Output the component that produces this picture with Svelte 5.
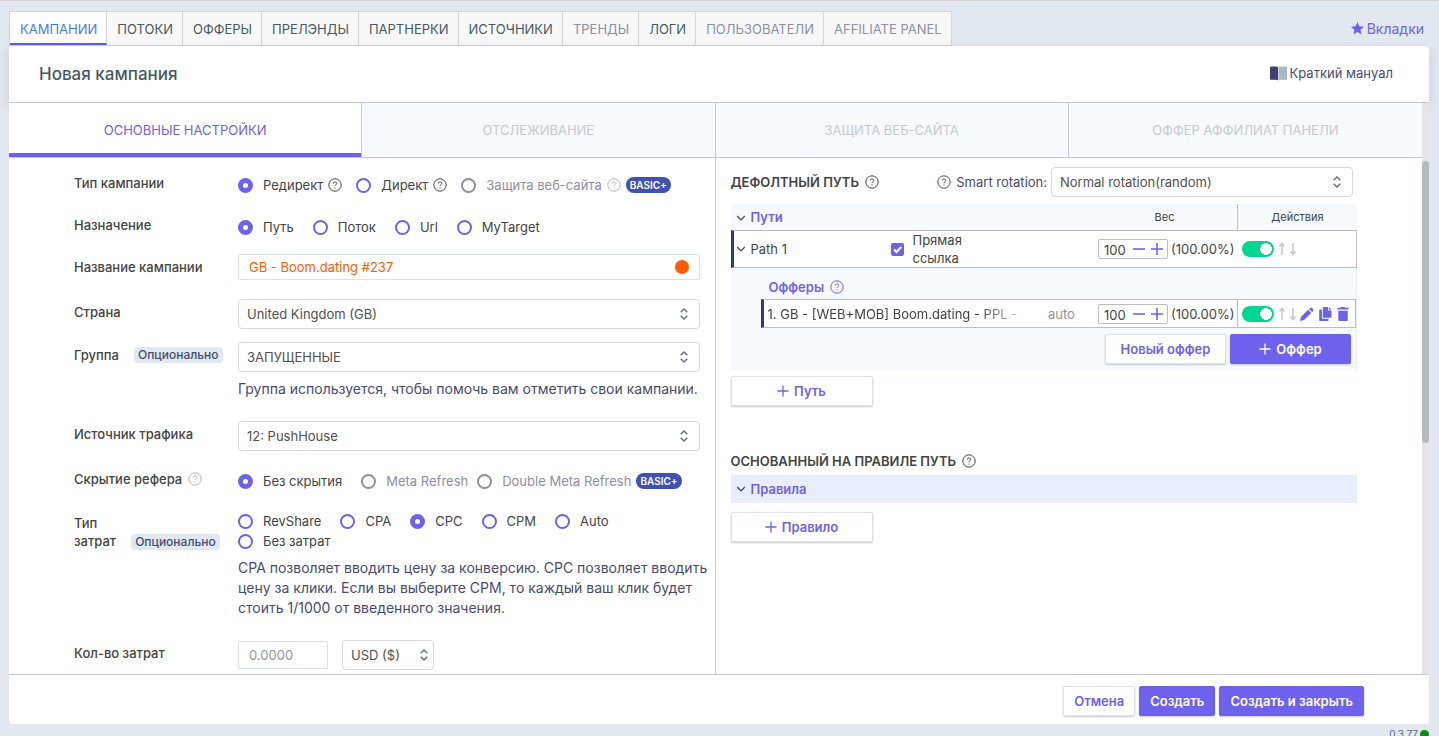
<script>
	let campaignType = $state('redirect');
	let target = $state('path');
	let referrer = $state('none');
	let costType = $state('cpc');
	let campaignName = $state('GB - Boom.dating #237');
	let directLink = $state(true);

	const tabs = [
		{ title: 'КАМПАНИИ', active: true },
		{ title: 'ПОТОКИ' },
		{ title: 'ОФФЕРЫ' },
		{ title: 'ПРЕЛЭНДЫ' },
		{ title: 'ПАРТНЕРКИ' },
		{ title: 'ИСТОЧНИКИ' },
		{ title: 'ТРЕНДЫ', muted: true },
		{ title: 'ЛОГИ' },
		{ title: 'ПОЛЬЗОВАТЕЛИ', muted: true },
		{ title: 'AFFILIATE PANEL', muted: true }
	];

	const sections = [
		'ОСНОВНЫЕ НАСТРОЙКИ',
		'ОТСЛЕЖИВАНИЕ',
		'ЗАЩИТА ВЕБ-САЙТА',
		'ОФФЕР АФФИЛИАТ ПАНЕЛИ'
	];

	const targets = [
		{ value: 'path', title: 'Путь' },
		{ value: 'flow', title: 'Поток' },
		{ value: 'url', title: 'Url' },
		{ value: 'mytarget', title: 'MyTarget' }
	];

	const costTypes = [
		{ value: 'revshare', title: 'RevShare' },
		{ value: 'cpa', title: 'CPA' },
		{ value: 'cpc', title: 'CPC' },
		{ value: 'cpm', title: 'CPM' },
		{ value: 'auto', title: 'Auto' },
		{ value: 'free', title: 'Без затрат' }
	];
</script>

{#snippet help(tone)}
	<svg class="help {tone}" viewBox="0 0 14 14" width="14" height="14" aria-hidden="true">
		<circle cx="7" cy="7" r="6.2" />
		<path d="M5.3 5.6c0-1 .7-1.7 1.7-1.7s1.8.6 1.8 1.6c0 1.2-1.8 1.2-1.8 2.6" />
		<path d="M7 9.5v1" />
	</svg>
{/snippet}

{#snippet chevron()}
	<svg class="chevron" viewBox="0 0 10 10" width="10" height="10" aria-hidden="true">
		<path d="M1.2 3 5 6.800 8.800 3" />
	</svg>
{/snippet}

{#snippet plus()}
	<svg class="plus" viewBox="0 0 12 12" width="12" height="12" aria-hidden="true">
		<path d="M6 .5v11M.5 6h11" />
	</svg>
{/snippet}

{#snippet weight(name)}
	<div class="weight">
		<span class="stepper">
			<input type="text" value="100" aria-label={name} />
			<button type="button" aria-label="Меньше">
				<svg viewBox="0 0 12 12" width="12" height="12"><path d="M0 6h12" /></svg>
			</button>
			<button type="button" aria-label="Больше">
				<svg viewBox="0 0 12 12" width="12" height="12"><path d="M0 6h12M6 0v12" /></svg>
			</button>
		</span>
		<span>(100.00%)</span>
	</div>
{/snippet}

{#snippet arrows()}
	<svg class="arrows" viewBox="0 0 18 14" width="18" height="14" aria-hidden="true">
		<path d="M4 13V2M1.500 4.500 4 1.500 6.500 4.500M15 1v11M12.500 9.500l2.500 3 2.500-3" />
	</svg>
{/snippet}

<div class="page">
	<nav class="topbar">
		<div class="tabs">
			{#each tabs as tab}
				<a href="#top" class:active={tab.active} class:muted={tab.muted}>{tab.title}</a>
			{/each}
		</div>
		<a class="bookmarks" href="#tabs">
			<svg viewBox="0 0 12 12" width="13" height="13" aria-hidden="true">
				<path d="M6 0l1.700 3.900 4.300.4-3.200 2.900.9 4.300L6 9.300l-3.700 2.200.9-4.300L0 4.300l4.300-.4z" />
			</svg>
			Вкладки
		</a>
	</nav>

	<main class="panel">
		<header>
			<h1>Новая кампания</h1>
			<a class="manual" href="#manual">
				<svg viewBox="0 0 17 15" width="17" height="15" aria-hidden="true">
					<path fill="#413f72" d="M.8.500h5.200q1.500 0 2 .7v13.300q-.6-.7-2-.7H.8q-.8 0-.8-.8V1.300Q0 .5.800.500z" />
					<path fill="#a9b7c7" d="M16.200.500H11q-1.800 0-2.500.7v13.300q.6-.7 2-.7h5.700q.8 0 .8-.8V1.300q0-.8-.8-.8z" />
				</svg>
				Краткий мануал
			</a>
		</header>

		<div class="scroller">
			<div class="content">
				<div class="sections" role="tablist">
					{#each sections as section, i}
						<button type="button" role="tab" aria-selected={i === 0} class:active={i === 0}>{section}</button>
					{/each}
				</div>

				<div class="columns">
					<form class="settings">
						<div class="row">
							<span class="label" id="type-label">Тип кампании</span>
							<div class="radios" role="radiogroup" aria-labelledby="type-label">
								<label class="with-help"><input type="radio" bind:group={campaignType} value="redirect" />Редирект {@render help('dark')}</label>
								<label class="with-help"><input type="radio" bind:group={campaignType} value="direct" />Директ {@render help('dark')}</label>
								<label class="disabled"><input type="radio" bind:group={campaignType} value="protect" disabled />Защита веб-сайта {@render help('light')}<span class="plan">BASIC+</span></label>
							</div>
						</div>

						<div class="row">
							<span class="label" id="target-label">Назначение</span>
							<div class="radios" role="radiogroup" aria-labelledby="target-label">
								{#each targets as item}
									<label><input type="radio" bind:group={target} value={item.value} />{item.title}</label>
								{/each}
							</div>
						</div>

						<div class="row name">
							<label class="label" for="name">Название кампании</label>
							<div class="field">
								<input id="name" type="text" bind:value={campaignName} />
								<button type="button" class="color" aria-label="Цвет"></button>
							</div>
						</div>

						<div class="row control">
							<label class="label" for="country">Страна</label>
							<select id="country"><option>United Kingdom (GB)</option></select>
						</div>

						<div class="row control near">
							<label class="label" for="group">Группа <span class="optional">Опционально</span></label>
							<div>
								<select id="group"><option>ЗАПУЩЕННЫЕ</option></select>
								<p>Группа используется, чтобы помочь вам отметить свои кампании.</p>
							</div>
						</div>

						<div class="row control far">
							<label class="label" for="source">Источник трафика</label>
							<select id="source"><option>12: PushHouse</option></select>
						</div>

						<div class="row">
							<span class="label" id="ref-label">Скрытие рефера {@render help('light')}</span>
							<div class="radios" role="radiogroup" aria-labelledby="ref-label">
								<label><input type="radio" bind:group={referrer} value="none" />Без скрытия</label>
								<label class="disabled"><input type="radio" bind:group={referrer} value="meta" disabled />Meta Refresh</label>
								<label class="disabled"><input type="radio" bind:group={referrer} value="double" disabled />Double Meta Refresh <span class="plan">BASIC+</span></label>
							</div>
						</div>

						<div class="row cost-type">
							<span class="label" id="cost-label"><span>Тип<br />затрат</span> <span class="optional">Опционально</span></span>
							<div>
								<div class="radios wrap" role="radiogroup" aria-labelledby="cost-label">
									{#each costTypes as item}
										<label><input type="radio" bind:group={costType} value={item.value} />{item.title}</label>
									{/each}
								</div>
								<p>CPA позволяет вводить цену за конверсию. CPC позволяет вводить цену за клики. Если вы выберите CPM, то каждый ваш клик будет стоить 1/1000 от введенного значения.</p>
							</div>
						</div>

						<div class="row control far">
							<label class="label" for="cost">Кол-во затрат</label>
							<div class="cost">
								<input id="cost" type="text" placeholder="0.0000" />
								<select aria-label="Валюта"><option>USD ($)</option></select>
							</div>
						</div>
					</form>

					<section class="paths">
						<div class="paths-head">
							<h2>ДЕФОЛТНЫЙ ПУТЬ {@render help('dark')}</h2>
							<label for="rotation">{@render help('indigo')} Smart rotation:</label>
							<select id="rotation"><option>Normal rotation(random)</option></select>
						</div>

						<table class="path-table">
							<colgroup>
								<col class="col-name" />
								<col />
								<col class="col-weight" />
								<col class="col-actions" />
							</colgroup>
							<thead>
								<tr>
									<th class="title" colspan="2">{@render chevron()}Пути</th>
									<th>Вес</th>
									<th class="divided">Действия</th>
								</tr>
							</thead>
							<tbody>
								<tr class="item path">
									<td><div class="cell">{@render chevron()}Path 1</div></td>
									<td>
										<label class="direct"><input type="checkbox" bind:checked={directLink} /><span>Прямая ссылка</span></label>
									</td>
									<td>{@render weight('Вес пути')}</td>
									<td>
										<div class="actions"><input class="toggle" type="checkbox" checked aria-label="Путь включен" />{@render arrows()}</div>
									</td>
								</tr>
								<tr>
									<td class="nested" colspan="4">
										<h3>Офферы {@render help('violet')}</h3>
										<table>
											<colgroup>
												<col />
												<col class="col-auto" />
												<col class="col-weight" />
												<col class="col-actions" />
											</colgroup>
											<tbody>
												<tr class="item offer">
													<td><span class="offer-name">1. GB - [WEB+MOB] Boom.dating - PPL -</span></td>
													<td class="auto">auto</td>
													<td>{@render weight('Вес оффера')}</td>
													<td class="divided">
														<div class="actions">
															<input class="toggle" type="checkbox" checked aria-label="Оффер включен" />
															{@render arrows()}
															<button type="button" aria-label="Изменить">
																<svg viewBox="0 0 14 14" width="14" height="14"><path d="M0 14l.9-4 7.200-7.200 3.100 3.100L4 13.100zM9 1.900l1-1q1-.9 1.900 0l1.200 1.200q.9 1 0 1.900l-1 1z" /></svg>
															</button>
															<button type="button" aria-label="Копировать">
																<svg viewBox="0 0 14 14" width="14" height="14"><path d="M5.600 0H10v3.500h3.500V10q0 .8-.8.800H5.600q-.8 0-.8-.8V.800Q4.800 0 5.600 0zM10.800 0l2.700 2.700h-2.700zM2 2.500h1.900V11q0 .700.700.700h5.900v1.500q0 .8-.8.800H2q-.8 0-.8-.8V3.300q0-.8.800-.8z" /></svg>
															</button>
															<button type="button" aria-label="Удалить">
																<svg viewBox="0 0 14 14" width="14" height="14"><path d="M1.500.800h3l.7-.8h3.600l.7.800h3v1.800h-11zM2.300 3.700h9.400V13q0 1-1 1H3.300q-1 0-1-1z" /></svg>
															</button>
														</div>
													</td>
												</tr>
											</tbody>
										</table>
										<div class="offer-buttons">
											<button type="button" class="btn">Новый оффер</button>
											<button type="button" class="btn primary">{@render plus()}Оффер</button>
										</div>
									</td>
								</tr>
							</tbody>
						</table>
						<button type="button" class="btn add">{@render plus()}Путь</button>

						<h2 class="rules-title">ОСНОВАННЫЙ НА ПРАВИЛЕ ПУТЬ {@render help('dark')}</h2>
						<div class="rules">{@render chevron()}Правила</div>
						<button type="button" class="btn add">{@render plus()}Правило</button>
					</section>
				</div>
			</div>
			<div class="scrollbar"><div class="thumb"></div></div>
		</div>

		<footer>
			<button type="button" class="btn">Отмена</button>
			<button type="button" class="btn primary">Создать</button>
			<button type="button" class="btn primary">Создать и закрыть</button>
		</footer>
	</main>

	<div class="version">0.3.77<i></i></div>
</div>

<style>
	:global(body) {
		background: #e1e8ef;
	}

	.page {
		box-sizing: border-box;
		display: flex;
		flex-direction: column;
		height: 100vh;
		overflow: hidden;
		padding: 10px 10px 0 9px;
		border-top: 1px solid #d4d4d4;
		background: #e1e8ef;
		color: #444;
		font-family: Inter, 'Liberation Sans', sans-serif;
		font-size: 13px;
		line-height: 20px;
	}

	.page :global(*) {
		box-sizing: border-box;
	}

	a {
		text-decoration: none;
	}

	button,
	input,
	select {
		margin: 0;
		font: inherit;
	}

	h1,
	h2,
	h3,
	p {
		margin: 0;
	}

	svg {
		flex: none;
		display: block;
	}

	/* top navigation */
	.topbar {
		flex: none;
		display: flex;
		justify-content: space-between;
		padding-right: 5px;
	}

	.tabs {
		display: flex;
		border: 1px solid #d4d4d4;
		border-right: 0;
	}

	.tabs a {
		height: 33px;
		padding: 0 9px 0 10px;
		border-right: 1px solid #d4d4d4;
		background: #f8f8f8;
		color: #455a64;
		line-height: 34px;
	}

	.tabs a.muted {
		color: #8e8ea5;
	}

	.tabs a.active {
		border-bottom: 2px solid #5b5ce6;
		background: #fff;
		color: #4a7be0;
	}

	.bookmarks {
		display: flex;
		align-items: center;
		gap: 3px;
		color: #6e62ec;
		font-size: 14px;
	}

	.bookmarks svg {
		fill: #6e62ec;
	}

	/* panel */
	.panel {
		flex: 1;
		display: flex;
		flex-direction: column;
		min-height: 0;
	}

	header {
		flex: none;
		display: flex;
		align-items: center;
		justify-content: space-between;
		height: 57px;
		padding: 0 36px 0 30px;
		border-bottom: 1px solid #c3c8d1;
		border-radius: 0 4px 0 0;
		background: #fff;
		box-shadow: 0 4px 12px rgba(90, 90, 160, 0.2);
	}

	h1 {
		color: #455a64;
		font-size: 17px;
		font-weight: 500;
	}

	.manual {
		display: flex;
		align-items: center;
		gap: 3px;
		padding-bottom: 2px;
		color: #484b6f;
	}

	.scroller {
		flex: 1;
		display: flex;
		min-height: 0;
		background: #fff;
	}

	.content {
		flex: 1;
		display: flex;
		flex-direction: column;
		min-width: 0;
		overflow: hidden;
	}

	.scrollbar {
		width: 7px;
		padding-top: 58px;
		background: #e3e5e6;
	}

	.thumb {
		height: 55%;
		max-height: 283px;
		border-radius: 4px;
		background: #b5babd;
	}

	.sections {
		flex: none;
		display: grid;
		grid-template-columns: repeat(4, 1fr);
		border-bottom: 1px solid #c3c8d1;
	}

	.sections button {
		height: 54px;
		padding: 0;
		border: 0;
		border-right: 1px solid #c3c8d1;
		background: #f6fafe;
		color: #c5c8d2;
	}

	.sections button:last-child {
		border-right: 0;
	}

	.sections button.active {
		background: #fff;
		color: #6e62ec;
		box-shadow: inset 0 -4px #6e62ec;
	}

	.columns {
		flex: 1;
		display: grid;
		grid-template-columns: 1fr 1fr;
		min-height: 0;
	}

	/* campaign form */
	.settings {
		padding: 15px 15px 0 65px;
		border-right: 1px solid #c3c8d1;
	}

	.row {
		display: grid;
		grid-template-columns: 164px 1fr;
		align-items: start;
		margin-bottom: 18px;
	}

	.row.name {
		margin: -3px 0 19px;
	}

	.row.near {
		margin-top: -5px;
	}

	.row.far {
		margin-top: 22px;
	}

	.label {
		display: flex;
		align-items: center;
		gap: 6px;
		font-weight: 500;
	}

	.control > .label,
	.name > .label,
	.cost-type > .label {
		padding-top: 3px;
	}

	.cost-type > .label {
		align-items: end;
		line-height: 18px;
	}

	.optional {
		margin-left: 9px;
		padding: 0 4px;
		border-radius: 4px;
		background: #e1e8ef;
		color: #484b6f;
		font-size: 12px;
		line-height: 16px;
	}

	.radios {
		display: flex;
		align-items: center;
		gap: 0 19px;
		height: 24px;
	}

	.radios.wrap {
		flex-wrap: wrap;
		height: auto;
	}

	.radios label {
		display: flex;
		align-items: center;
		gap: 10px;
		white-space: nowrap;
	}

	.radios label.with-help {
		gap: 5px;
		margin-right: -5px;
	}

	.radios label.with-help input,
	.radios label.disabled input {
		margin-right: 5px;
	}

	.radios label.disabled {
		gap: 5px;
		color: #8e8ea5;
	}

	.radios label.disabled + label.disabled {
		margin-left: -10px;
	}

	input[type='radio'] {
		appearance: none;
		width: 15px;
		height: 15px;
		border: 2px solid #6e62ec;
		border-radius: 50%;
		background: #fff;
	}

	input[type='radio']:checked {
		border-width: 5px;
	}

	input[type='radio']:disabled {
		border-color: #8e8ea5;
	}

	.plan {
		padding: 0 4px;
		border-radius: 8px;
		background: #3f51b5;
		color: #fff;
		font-size: 10px;
		font-weight: 600;
		line-height: 16px;
	}

	.help {
		fill: none;
		stroke: #444;
		stroke-width: 1;
	}

	.help.light {
		stroke: #b8b8b8;
	}

	.help.indigo {
		stroke: #484b6f;
	}

	.help.violet {
		stroke: #6e62ec;
	}

	.field {
		display: flex;
		align-items: center;
		height: 26px;
		padding-right: 10px;
		border: 1px solid #dae1e8;
		border-radius: 2px;
	}

	.field input {
		flex: 1;
		min-width: 0;
		height: 24px;
		padding: 0 10px;
		border: 0;
		background: none;
		color: #ff5c00;
		outline: none;
	}

	.color {
		width: 14px;
		height: 14px;
		padding: 0;
		border: 0;
		border-radius: 50%;
		background: #ff5c00;
	}

	select {
		appearance: none;
		display: block;
		width: 100%;
		height: 30px;
		padding: 0 24px 0 8px;
		border: 1px solid #d9d9d9;
		border-radius: 4px;
		background: #fff url("data:image/svg+xml,%3Csvg xmlns='http://www.w3.org/2000/svg' width='8' height='12' fill='none' stroke='%235f6b87' stroke-width='1.400'%3E%3Cpath d='M.700 4.300 4 1l3.300 3.300M.700 7.700 4 11l3.300-3.300'/%3E%3C/svg%3E") no-repeat right 11px center;
		color: #505050;
		text-overflow: ellipsis;
	}

	p {
		margin: 7px -15px 0 0;
		color: #484b6f;
		font-size: 14px;
	}

	.cost {
		display: flex;
		align-items: center;
		gap: 14px;
	}

	.cost input {
		width: 90px;
		height: 28px;
		padding: 0 10px;
		border: 1px solid #dae1e8;
		border-radius: 2px;
	}

	.cost input::placeholder {
		color: #949494;
	}

	.cost select {
		width: 92px;
		background-position: right 5px center;
	}

	/* paths */
	.paths {
		padding: 9px 65px 0 15px;
	}

	.paths-head {
		display: flex;
		align-items: center;
		margin-bottom: 7px;
		padding-right: 4px;
	}

	h2 {
		flex: 1;
		display: flex;
		align-items: center;
		gap: 6px;
		font-size: 13px;
		font-weight: 600;
		line-height: 20px;
	}

	.paths-head label {
		display: flex;
		align-items: center;
		gap: 5px;
		margin-right: 4px;
		color: #484b6f;
	}

	.paths-head select {
		width: 302px;
	}

	table {
		width: 100%;
		border-spacing: 0;
		table-layout: fixed;
	}

	.path-table {
		background: #f6fafe;
	}

	th,
	td {
		padding: 0;
		text-align: left;
	}

	th {
		height: 26px;
		font-size: 11px;
		font-weight: 400;
		text-align: center;
	}

	th.title {
		text-align: left;
	}

	th.title,
	.rules {
		padding-left: 5px;
		color: #6e62ec;
		font-size: 13px;
		font-weight: 600;
	}

	th .chevron {
		display: inline-block;
		margin-right: 5px;
		vertical-align: -1px;
	}

	.col-name {
		width: 160px;
	}

	.col-auto {
		width: 44px;
	}

	.col-weight {
		width: 145px;
	}

	.col-actions {
		width: 120px;
	}

	.nested .col-actions {
		width: 119px;
	}

	.item td {
		height: 38px;
		border: 0 solid #bdbdbd;
		border-width: 1px 0;
		background: #fff;
	}

	.item.offer td {
		height: 29px;
	}

	.item td:first-child {
		border-left: 3px solid #283a86;
	}

	.item td:last-child {
		border-right: 1px solid #bdbdbd;
	}

	th.divided,
	.item.offer td.divided {
		border-left: 1px solid #bdbdbd;
	}

	.auto {
		color: #949494;
	}

	.chevron {
		fill: none;
		stroke: #444;
		stroke-width: 1.2;
	}

	.cell {
		display: flex;
		align-items: center;
		gap: 5px;
		padding-left: 2px;
	}

	.direct {
		display: flex;
		align-items: center;
		gap: 9px;
		line-height: 18px;
	}

	.direct span {
		width: 60px;
	}

	.direct input {
		appearance: none;
		width: 13px;
		height: 13px;
		border-radius: 2px;
		background: #6e62ec;
	}

	.direct input:checked {
		background: #6e62ec url("data:image/svg+xml,%3Csvg xmlns='http://www.w3.org/2000/svg' width='13' height='13' fill='none' stroke='white' stroke-width='2'%3E%3Cpath d='M3 6.500 5.500 9 10.200 4'/%3E%3C/svg%3E");
	}

	.weight {
		display: flex;
		align-items: center;
		gap: 3px;
		padding-left: 6px;
	}

	.stepper {
		display: flex;
		align-items: center;
		gap: 6px;
		width: 70px;
		height: 20px;
		padding-left: 5px;
		border: 1px solid #bdbdbd;
		border-radius: 2px;
	}

	.stepper input {
		width: 23px;
		height: 16px;
		padding: 2px 0 0;
		border: 0;
		background: none;
		color: #444;
		line-height: 14px;
		outline: none;
	}

	.stepper button,
	.actions button {
		padding: 0;
		border: 0;
		background: none;
	}

	.stepper svg {
		stroke: #6e62ec;
		stroke-width: 1.6;
	}

	.actions {
		display: flex;
		align-items: center;
		gap: 4px;
		padding-left: 4px;
	}

	.path .actions {
		padding-left: 5px;
	}

	.actions svg {
		fill: #6e62ec;
	}

	.actions .arrows {
		fill: none;
		stroke: #c8c8c8;
		stroke-width: 1.5;
	}

	.toggle {
		appearance: none;
		flex: none;
		width: 32px;
		height: 16px;
		border-radius: 8px;
		background: #c8c8c8 radial-gradient(circle, #fff 6px, transparent 6px) no-repeat -8px 0 / 32px 16px;
	}

	.toggle:checked {
		background-color: #00d68f;
		background-position: 8px 0;
	}

	.nested {
		padding: 9px 0 6px 30px;
		border-right: 1px solid #e5edfd;
	}

	h3 {
		display: flex;
		align-items: center;
		gap: 6px;
		margin-bottom: 2px;
		padding-left: 8px;
		color: #6e62ec;
		font-size: 13px;
		font-weight: 600;
	}

	.offer-name {
		display: inline-block;
		padding-left: 4px;
		white-space: nowrap;
		mask-image: linear-gradient(to right, #000 85%, rgba(0, 0, 0, 0.3));
	}

	.offer-buttons {
		display: flex;
		justify-content: flex-end;
		gap: 4px;
		margin-top: 6px;
		padding-right: 5px;
	}

	.btn {
		display: flex;
		align-items: center;
		justify-content: center;
		gap: 5px;
		height: 30px;
		padding: 0 10px;
		border: 1px solid #dfe1e8;
		border-radius: 2px;
		background: #fff;
		box-shadow: 0 1px 2px rgba(40, 40, 60, 0.25);
		color: #6e62ec;
		font-weight: 600;
	}

	.btn.primary {
		border-color: #6e62ec;
		background: #6e62ec;
		color: #fff;
	}

	.btn.add {
		width: 142px;
		margin-top: 6px;
	}

	.offer-buttons .btn {
		width: 121px;
		padding: 0;
	}

	.plus {
		fill: none;
		stroke: currentColor;
		stroke-width: 1.3;
	}

	.rules-title {
		margin: 45px 0 4px;
	}

	.rules {
		display: flex;
		align-items: center;
		gap: 5px;
		height: 28px;
		margin-bottom: 9px;
		background: #e8eefe;
	}

	footer {
		flex: none;
		display: flex;
		align-items: center;
		justify-content: flex-end;
		gap: 4px;
		height: 50px;
		padding: 3px 65px 0 0;
		border-top: 1px solid #c3c8d1;
		border-radius: 0 0 4px 4px;
		background: #fff;
	}

	.version {
		flex: none;
		display: flex;
		align-items: center;
		justify-content: flex-end;
		gap: 2px;
		height: 12px;
		padding-top: 8px;
		color: #5b6b7c;
		font-size: 10px;
	}

	.version i {
		width: 9px;
		height: 9px;
		border-radius: 50%;
		background: #0a8a0a;
	}
</style>
